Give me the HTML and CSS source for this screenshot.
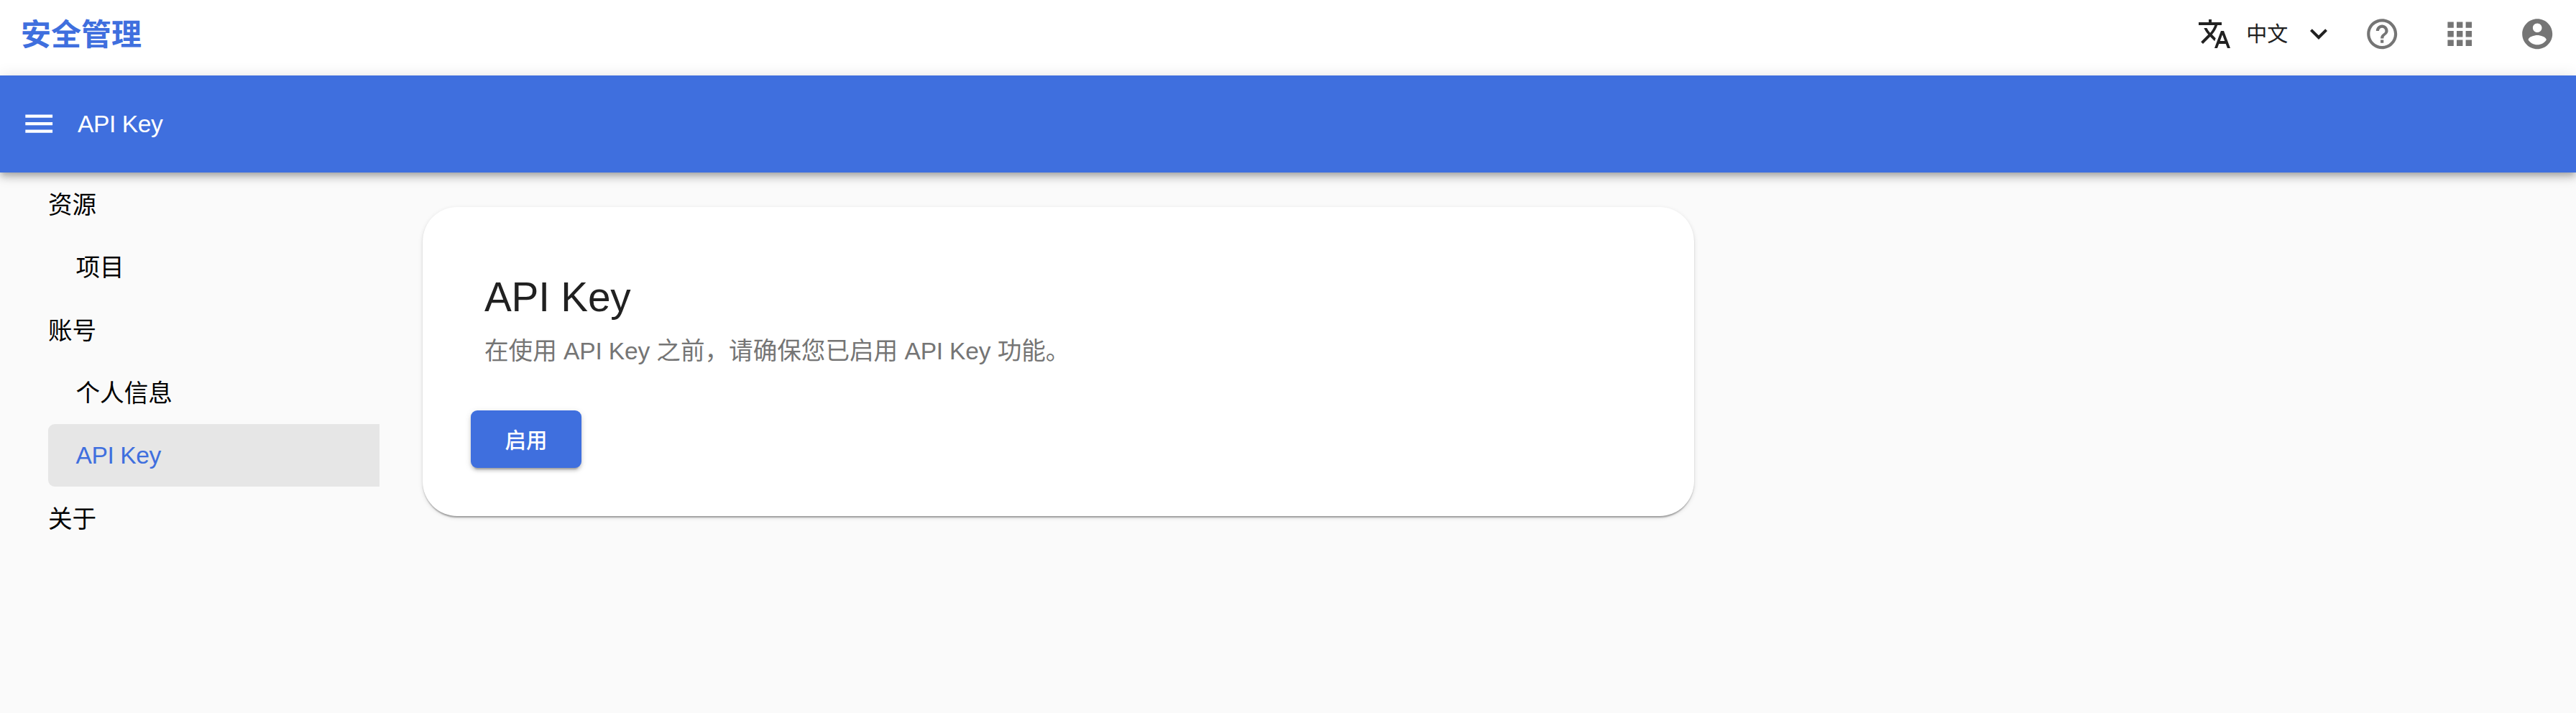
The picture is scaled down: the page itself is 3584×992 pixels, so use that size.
FILE: index.html
```html
<!DOCTYPE html>
<html lang="zh-CN">
<head>
<meta charset="utf-8">
<title>API Key</title>
<link rel="stylesheet" href="styles.css">
</head>
<body>
<header class="topbar">
  <div class="brand">安全管理</div>
  <div class="tools">
    <button class="lang">
      <svg class="icon-sm" viewBox="0 0 24 24"><path d="M12.87 15.07l-2.54-2.51.03-.03c1.74-1.94 2.98-4.17 3.71-6.53H17V4h-7V2H8v2H1v1.99h11.17C11.5 7.92 10.44 9.75 9 11.35 8.07 10.32 7.3 9.19 6.69 8h-2c.73 1.63 1.73 3.17 2.98 4.56l-5.09 5.02L4 19l5-5 3.11 3.11.76-2.04zM18.5 10h-2L12 22h2l1.12-3h4.75L21 22h2l-4.5-12zm-2.62 7l1.62-4.33L19.12 17h-3.24z"/></svg>
      <span class="lang-label">中文</span>
      <svg class="icon-sm" viewBox="0 0 24 24"><path d="M16.59 8.59L12 13.17 7.41 8.59 6 10l6 6 6-6z"/></svg>
    </button>
    <svg class="icon" viewBox="0 0 24 24"><path d="M11 18h2v-2h-2v2zm1-16C6.48 2 2 6.48 2 12s4.48 10 10 10 10-4.48 10-10S17.52 2 12 2zm0 18c-4.41 0-8-3.59-8-8s3.59-8 8-8 8 3.590 8 8-3.590 8-8 8zm0-14c-2.210 0-4 1.790-4 4h2c0-1.100.9-2 2-2s2 .9 2 2c0 2-3 1.750-3 5h2c0-2.250 3-2.500 3-5 0-2.210-1.790-4-4-4z"/></svg>
    <svg class="icon" viewBox="0 0 24 24"><path d="M4 8h4V4H4v4zm6 12h4v-4h-4v4zm-6 0h4v-4H4v4zm0-6h4v-4H4v4zm6 0h4v-4h-4v4zm6-10v4h4V4h-4zm-6 4h4V4h-4v4zm6 6h4v-4h-4v4zm0 6h4v-4h-4v4z"/></svg>
    <svg class="icon" viewBox="0 0 24 24"><path fill-rule="evenodd" d="M12 2C6.480 2 2 6.480 2 12s4.480 10 10 10 10-4.480 10-10S17.520 2 12 2zm0 3c1.660 0 3 1.340 3 3s-1.340 3-3 3-3-1.340-3-3 1.340-3 3-3zm0 14.200c-2.500 0-4.710-1.280-6-3.220.03-1.990 4-3.080 6-3.080 1.990 0 5.970 1.090 6 3.080-1.290 1.940-3.500 3.220-6 3.220z"/></svg>
  </div>
</header>
<div class="appbar">
  <svg class="menu-icon" viewBox="0 0 24 24"><path d="M3 18h18v-2H3v2zm0-5h18v-2H3v2zm0-7v2h18V6H3z"/></svg>
  <span class="appbar-title">API Key</span>
</div>
<div class="layout">
  <nav class="sidebar">
    <a class="item">资源</a>
    <a class="item sub">项目</a>
    <a class="item">账号</a>
    <a class="item sub">个人信息</a>
    <a class="item sub active">API Key</a>
    <a class="item">关于</a>
  </nav>
  <main class="card">
    <h1 class="card-title">API Key</h1>
    <p class="card-text">在使用 <span class="latin">API Key</span> 之前，请确保您已启用 <span class="latin">API Key</span> 功能。</p>
    <button class="enable">启用</button>
  </main>
</div>
</body>
</html>
```
FILE: styles.css
```css
* { box-sizing: border-box; }

body {
  margin: 0;
  min-height: 992px;
  background: #fafafa;
  color: #212121;
  font-family: "Liberation Sans", "Noto Sans CJK SC", sans-serif;
  font-size: 33.6px;
}

svg { display: block; flex: none; fill: currentColor; }

button { border: 0; padding: 0; background: none; color: inherit; font: inherit; }

.topbar {
  display: flex;
  align-items: center;
  justify-content: space-between;
  height: 105px;
  padding: 0 28.5px 10px 29px;
  background: #fff;
}

.brand {
  padding-top: 3px;
  color: #3f6fde;
  font-size: 42px;
  font-weight: 700;
  line-height: 60px;
}

.tools { display: flex; align-items: center; gap: 57.6px; color: #757575; }

.lang { display: flex; align-items: center; margin-right: -18.6px; color: #212121; }
.lang-label { margin: 0 19px 0 20px; padding-top: 2px; font-size: 29px; line-height: 44px; }

.icon { width: 50.4px; height: 50.4px; }
.icon-sm { width: 48px; height: 48px; }

.appbar {
  position: relative;
  display: flex;
  align-items: center;
  height: 135px;
  padding-left: 29px;
  background: #3f6fde;
  color: #fff;
  box-shadow: 0 4px 8px -2px rgba(0, 0, 0, .2), 0 8px 10px rgba(0, 0, 0, .14), 0 2px 21px rgba(0, 0, 0, .12);
}

.menu-icon { width: 50.4px; height: 50.4px; }
.appbar-title { margin-left: 28.6px; line-height: 50px; letter-spacing: -.4px; }

.layout { display: flex; align-items: flex-start; }

.sidebar { width: 528px; padding-left: 67px; color: #000; }

.item { display: block; height: 87.4px; padding-top: 2px; line-height: 87.4px; }
.sub { padding-left: 38.5px; }
.active {
  padding-top: 0;
  border-radius: 9px 0 0 9px;
  background: #e6e6e6;
  color: #3f6fde;
  letter-spacing: -.4px;
}

.card {
  width: 1769px;
  height: 430px;
  margin: 48px 0 0 60px;
  padding: 92px 67px 0;
  border-radius: 48px;
  background: #fff;
  box-shadow: 0 4px 2px -2px rgba(0, 0, 0, .2), 0 2px 2px rgba(0, 0, 0, .14), 0 2px 6px rgba(0, 0, 0, .12);
}

.card-title { margin: 0 0 0 19px; font-size: 56.7px; font-weight: 400; line-height: 68px; letter-spacing: -.2px; }
.card-text { margin: 16px 0 0 19px; color: #757575; line-height: 50px; }
.latin { letter-spacing: -.2px; }

.enable {
  display: block;
  width: 154px;
  height: 80px;
  margin-top: 57px;
  padding-bottom: 2px;
  border-radius: 9px;
  background: #3f6fde;
  color: #fff;
  font-size: 29.4px;
  font-weight: 500;
  box-shadow: 0 6px 2px -4px rgba(0, 0, 0, .2), 0 4px 4px rgba(0, 0, 0, .14), 0 2px 10px rgba(0, 0, 0, .12);
}
```
